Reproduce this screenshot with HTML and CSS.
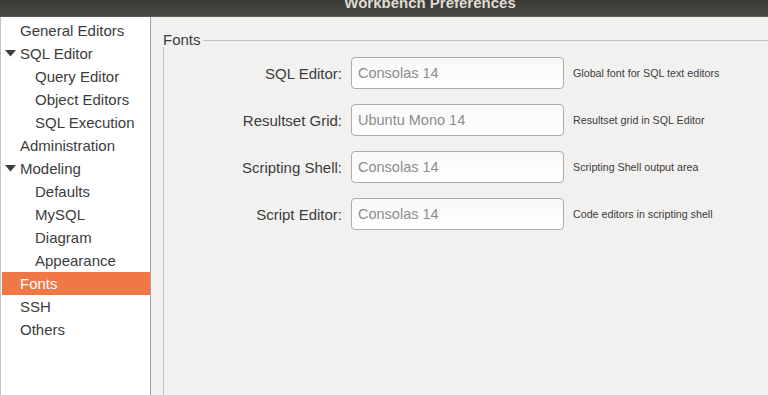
FILE: index.html
```html
<!DOCTYPE html>
<html lang="en">
<head>
  <meta charset="UTF-8" />
  <title>Workbench Preferences</title>
  <link rel="stylesheet" href="styles.css">
</head>
<body>
  <div class="titlebar"><span class="title">Workbench Preferences</span></div>
  <div class="window">
    <ul class="tree">
      <li class="top">General Editors</li>
      <li class="top expander"><svg class="arrow" width="11" height="7" viewBox="0 0 11 7"><path d="M0 0 L11 0 L5.5 6.5 Z" /></svg>SQL Editor</li>
      <li class="child">Query Editor</li>
      <li class="child">Object Editors</li>
      <li class="child">SQL Execution</li>
      <li class="top">Administration</li>
      <li class="top expander"><svg class="arrow" width="11" height="7" viewBox="0 0 11 7"><path d="M0 0 L11 0 L5.5 6.5 Z" /></svg>Modeling</li>
      <li class="child">Defaults</li>
      <li class="child">MySQL</li>
      <li class="child">Diagram</li>
      <li class="child">Appearance</li>
      <li class="top selected">Fonts</li>
      <li class="top">SSH</li>
      <li class="top">Others</li>
    </ul>
    <div class="pane">
      <fieldset class="frame">
        <legend>Fonts</legend>
        <div class="font-grid">
          <label class="font-label">SQL Editor:</label>
          <input class="entry" type="text" placeholder="Consolas 14" />
          <span class="hint">Global font for SQL text editors</span>

          <label class="font-label">Resultset Grid:</label>
          <input class="entry" type="text" placeholder="Ubuntu Mono 14" />
          <span class="hint">Resultset grid in SQL Editor</span>

          <label class="font-label">Scripting Shell:</label>
          <input class="entry" type="text" placeholder="Consolas 14" />
          <span class="hint">Scripting Shell output area</span>

          <label class="font-label">Script Editor:</label>
          <input class="entry" type="text" placeholder="Consolas 14" />
          <span class="hint">Code editors in scripting shell</span>
        </div>
      </fieldset>
    </div>
  </div>
</body>
</html>
```

FILE: styles.css
```css
html, body {
  margin: 0;
  padding: 0;
  height: 100%;
  overflow: hidden;
}
body {
  font-family: 'Liberation Sans', Arial, sans-serif;
  color: #3c3c3c;
  background: #f2f1f0;
}

/* window title, scrolled partly off the top like the screenshot */
.titlebar {
  height: 17px;
  overflow: hidden;
  padding-left: 92px;
  text-align: center;
  background: linear-gradient(#3b3a36, #4a4944);
  border-bottom: 1px solid #5a5853;
  box-sizing: border-box;
}
.title {
  display: block;
  margin-top: -6px;
  line-height: 17px;
  font-size: 15px;
  font-weight: bold;
  color: #dfdbd2;
}

.window {
  display: flex;
  height: 378px;
}

.tree {
  list-style: none;
  margin: 0;
  padding: 2px 0 0 1px;
  width: 148px;
  flex: none;
  background: #fff;
  border-left: 1px solid #c4c4c4;
  border-right: 1px solid #a4a4a4;
  font-size: 15px;
}
.tree li {
  height: 23px;
  box-sizing: border-box;
  padding-top: 1px;
  line-height: 22px;
  white-space: nowrap;
}
.tree .top {
  padding-left: 18px;
}
.tree .expander {
  padding-left: 3px;
}
.tree .child {
  padding-left: 33px;
}
.tree .selected {
  background: #f07746;
  color: #fff;
}
.arrow {
  margin-right: 4px;
  vertical-align: 2px;
  fill: #3c3c3c;
}

.pane {
  flex: 1;
  min-width: 0;
  padding: 16px 0 0 12px;
  overflow: hidden;
}

.frame {
  margin: 0 -20px 0 0;
  padding: 0;
  height: 400px;
  border: 1px solid #c2c0bc;
  border-right: none;
  border-bottom: none;
}
.frame legend {
  margin-left: -1px;
  padding: 0 2px 0 0;
  font-size: 15px;
  line-height: 14px;
}

.font-grid {
  display: grid;
  grid-template-columns: 178px 213px auto;
  grid-auto-rows: 32px;
  column-gap: 9px;
  row-gap: 15px;
  align-items: center;
  margin-top: 10px;
}
.font-label {
  text-align: right;
  font-size: 15px;
}
.entry {
  box-sizing: border-box;
  width: 213px;
  height: 32px;
  margin: 0;
  padding: 0 6px;
  border: 1px solid #aeaca8;
  border-radius: 4px;
  background: linear-gradient(#f8f8f7, #ffffff);
  font-family: 'Liberation Sans', Arial, sans-serif;
  font-size: 14.5px;
  color: #3c3c3c;
}
.entry::placeholder {
  color: #8c8c8c;
}
.hint {
  font-size: 10.7px;
  white-space: nowrap;
}
```
